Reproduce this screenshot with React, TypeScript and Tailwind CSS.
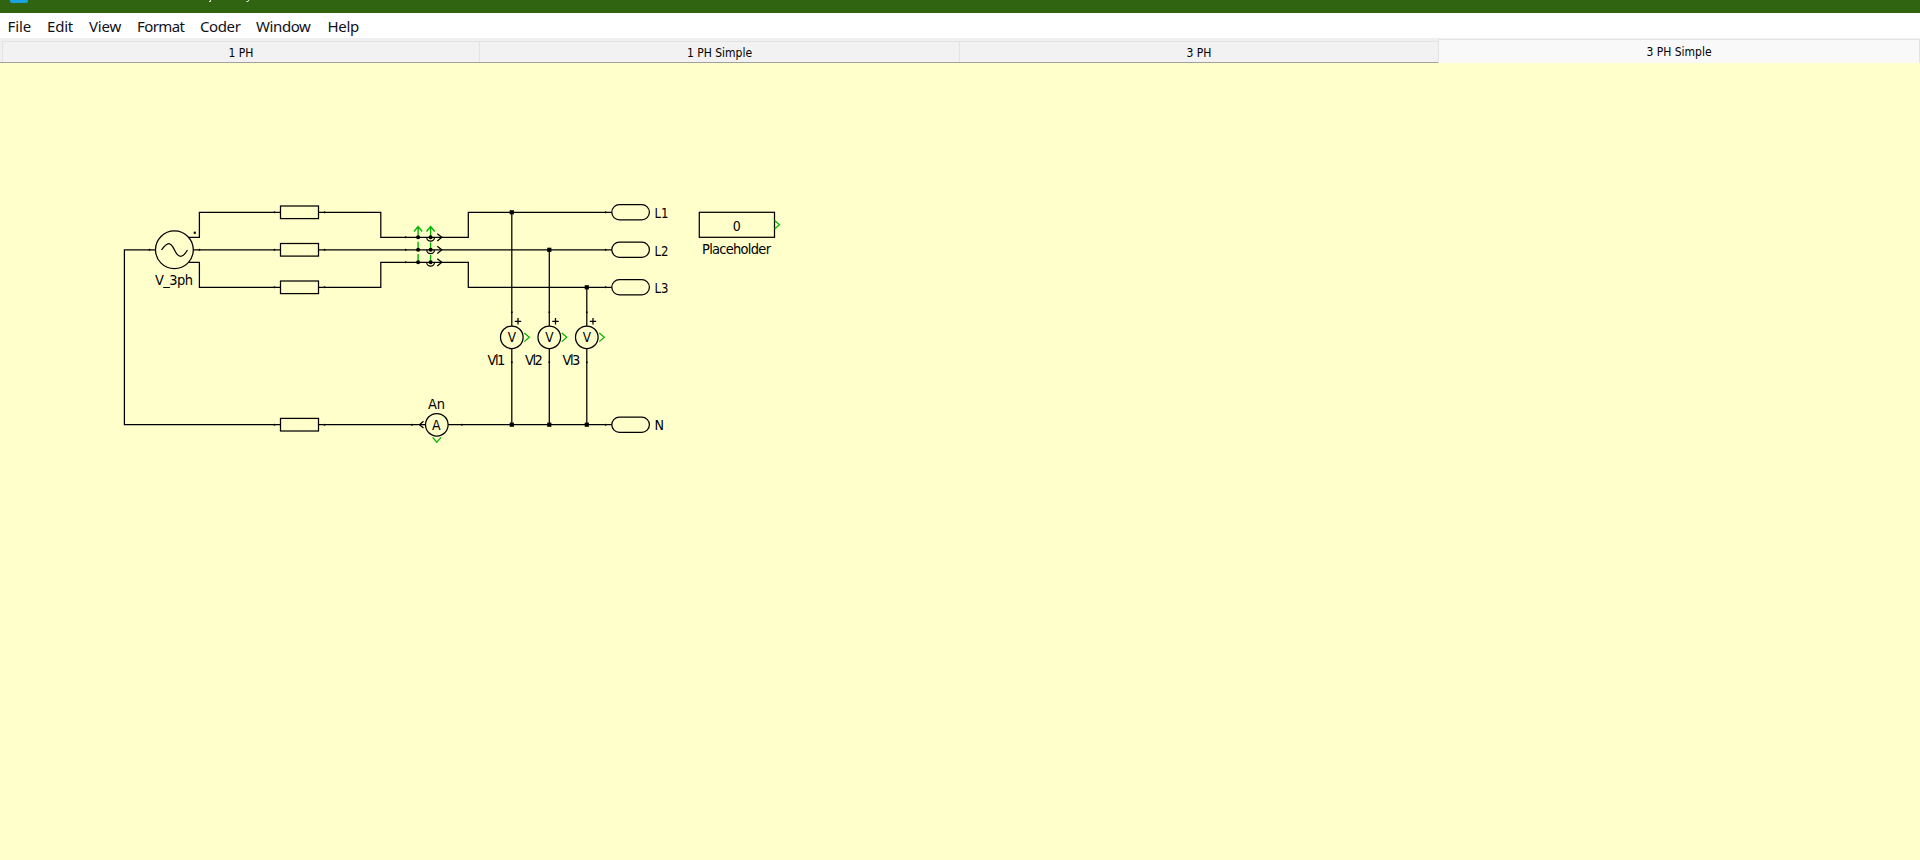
const menus: [string, string, string][] = [
  ["File", "w-[39.5px]", "tracking-[-0.1px]"],
  ["Edit", "w-[42px]", "tracking-[-0.2px]"],
  ["View", "w-[48px]", "tracking-[-0.2px]"],
  ["Format", "w-[63px]", "tracking-[-0.6px]"],
  ["Coder", "w-[56px]", "tracking-[-0.4px]"],
  ["Window", "w-[71.5px]", "tracking-[-0.4px]"],
  ["Help", "w-[40px]", "tracking-[-0.3px]"],
];

const pins: [number, number][] = [
  [274.5, 212.3], [274.5, 249.8], [274.5, 287.3], [274.5, 424.7],
  [324.5, 212.3], [324.5, 249.8], [324.5, 287.3], [324.5, 424.7],
  [149.5, 249.8], [199.4, 249.8],
  [405.7, 237.3], [405.7, 249.8], [405.7, 262.3],
  [605.6, 212.3], [605.6, 249.8], [605.6, 287.3], [605.6, 424.7],
  [411.8, 424.7], [461.8, 424.7],
  [511.8, 312.3], [549.3, 312.3], [586.8, 312.3],
  [511.8, 362.3], [549.3, 362.3], [586.8, 362.3],
];

function TitleBar() {
  return (
    <header className="flex h-[13px] shrink-0 items-start overflow-hidden bg-[#316411] pl-[10px] text-white">
      <span className="h-[3px] w-[18px] rounded-b-[2px] bg-[#1ba1e2]" />
      <svg className="ml-[176px] h-[3px] w-[50px]" viewBox="0 0 50 3">
        <path d="M6.5 0V1.500H5M45 0L44 1.500H42.500" fill="none" stroke="#e8f0e4" strokeWidth="1" />
      </svg>
    </header>
  );
}

function MenuBar() {
  return (
    <nav className="flex h-[25px] shrink-0 items-center bg-white pl-[7.5px] text-[15px] leading-none text-[#101018]">
      {menus.map(([name, width, tracking]) => (
        <span key={name} className={`${width} ${tracking} shrink-0 pt-px whitespace-nowrap`}>
          {name}
        </span>
      ))}
    </nav>
  );
}

function Tabs() {
  return (
    <div className="flex h-[25px] shrink-0 items-end bg-[#f0f0f0] font-['DejaVu_Sans_Condensed','DejaVu_Sans',sans-serif] text-[12px] text-black [font-stretch:condensed]">
      <div className="flex h-[22px] w-[1438px] border-b border-[#a0a0a0] pl-[2px]">
        <div className="flex w-[477px] items-center justify-center border-t border-l border-[#e3e3e3] bg-[#f2f2f2] pt-px">
          1 PH
        </div>
        <div className="flex w-[480px] items-center justify-center border-t border-l border-[#e3e3e3] bg-[#f2f2f2] pt-px">
          1 PH Simple
        </div>
        <div className="flex flex-1 items-center justify-center border-t border-l border-[#e3e3e3] bg-[#f2f2f2] pt-px">
          3 PH
        </div>
      </div>
      <div className="flex h-6 flex-1 items-center justify-center border-x border-t border-[#e3e3e3] bg-[#f9f9f9]">
        3 PH Simple
      </div>
    </div>
  );
}

function Resistor({ y }: { y: number }) {
  return <rect x="280.5" y={y - 6.3} width="38" height="12.6" fill="#ffffcc" />;
}

function Port({ y, label }: { y: number; label: string }) {
  return (
    <g>
      <rect x="611.8" y={y - 7.6} width="37.6" height="15.2" rx="7.6" fill="#ffffcc" />
      <text x="654.5" y={y + 5.7} fontSize="14.5" fill="#000" stroke="none" textLength={label.length > 1 ? 14 : 9.5} lengthAdjust="spacingAndGlyphs">
        {label}
      </text>
    </g>
  );
}

function Voltmeter({ x, top, label }: { x: number; top: number; label: string }) {
  return (
    <g>
      <path d={`M${x} ${top}V424.7`} />
      <circle cx={x} cy="337.3" r="11.3" fill="#ffffcc" />
      <path d={`M${x + 3} 321.3h6.4M${x + 6.2} 318v6.4`} />
      <path d={`M${x + 12.5} 333l5 4.3l-5 4.3`} stroke="#00b400" />
      <g fill="#000" stroke="none">
        <rect x={x - 2.1} y={top - 2.1} width="4.2" height="4.2" />
        <rect x={x - 2.1} y="422.6" width="4.2" height="4.2" />
        <text x={x} y="342.2" fontSize="13.5" textAnchor="middle">V</text>
        <text x={x - 24.2} y="365" fontSize="14.5" textLength="17.8">{label}</text>
      </g>
    </g>
  );
}

function Circuit() {
  return (
    <svg
      className="block h-[797px] w-[1920px] font-['DejaVu_Sans_Condensed','DejaVu_Sans',sans-serif] [font-stretch:condensed]"
      viewBox="0 63 1920 797"
      fill="none"
      stroke="#000"
      strokeWidth="1.25"
    >
      <path d="M418.1 237.3V226.5M418.1 241.7V248M418.1 254V261M414 231.5L418.1 226.5L422.2 231.5M430.6 237.3V226.5M430.6 242.5V248M430.6 255V261M426.5 231.5L430.6 226.5L434.7 231.5" stroke="#00b400" strokeWidth="1.4" />
      <path d="M189 237.3H199.4V212.3H380.8V237.3H468.3V212.3H612" />
      <path d="M193 249.8H612M155 249.8H124.4V424.7H612" />
      <path d="M189 262.3H199.4V287.3H380.8V262.3H468.3V287.3H612" />
      <circle cx="174.4" cy="249.8" r="18.9" fill="#ffffcc" />
      <path d="M161.5 250c6-8.5 9-8.5 13 0s8 8.5 13 0" />
      <circle cx="194.8" cy="232.8" r="1.2" fill="#000" stroke="none" />
      <g fill="#000" stroke="none">
        {pins.map(([x, y]) => (
          <circle key={`${x}-${y}`} cx={x} cy={y} r="0.95" />
        ))}
      </g>
      <Resistor y={212.3} />
      <Resistor y={249.8} />
      <Resistor y={287.3} />
      <Resistor y={424.7} />

      {[237.3, 249.8, 262.3].map((y) => (
        <g key={y}>
          <path d={`M426.7 ${y}a3.9 3.9 0 0 0 7.8 0M437.3 ${y - 3.6}l4.5 3.6l-4.5 3.6`} />
          <circle cx="418.1" cy={y} r="2" fill="#000" stroke="none" />
          <circle cx="430.6" cy={y} r="2" fill="#000" stroke="none" />
        </g>
      ))}

      <Voltmeter x={511.8} top={212.3} label="Vl1" />
      <Voltmeter x={549.3} top={249.8} label="Vl2" />
      <Voltmeter x={586.8} top={287.3} label="Vl3" />

      <circle cx="436.8" cy="424.8" r="11.3" fill="#ffffcc" />
      <path d="M423.5 421.3L419.5 424.7L423.5 428.1" />
      <path d="M432.6 437.3L436.8 442.2L441 437.3" stroke="#00b400" />

      <Port y={212.3} label="L1" />
      <Port y={249.8} label="L2" />
      <Port y={287.3} label="L3" />
      <Port y={424.7} label="N" />

      <rect x="699.3" y="212.3" width="75.2" height="25" />
      <path d="M774.5 220.5L779.5 224.8L774.5 229" stroke="#00b400" />

      <g fill="#000" stroke="none" fontSize="14.5" textAnchor="middle">
        <text x="174" y="285" textLength="38">V_3ph</text>
        <text x="436.5" y="409" textLength="17">An</text>
        <text x="436.3" y="430.4" fontSize="14">A</text>
        <text x="736.8" y="231" fontSize="14">0</text>
        <text x="736.5" y="254" textLength="69">Placeholder</text>
      </g>
    </svg>
  );
}

export default function App() {
  return (
    <div className="flex h-[860px] w-[1920px] flex-col overflow-hidden bg-[#ffffcc] font-['Noto_Sans',sans-serif]">
      <TitleBar />
      <MenuBar />
      <Tabs />
      <main className="flex-1">
        <Circuit />
      </main>
    </div>
  );
}
